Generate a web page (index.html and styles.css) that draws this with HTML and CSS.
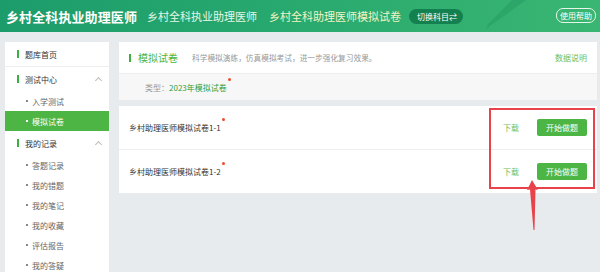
FILE: index.html
```html
<!DOCTYPE html>
<html lang="zh">
<head>
    <meta charset="UTF-8">
    <meta name="viewport" content="width=device-width, initial-scale=1.0">
    <title>模拟试卷</title>
    <link rel="stylesheet" href="styles.css">
</head>
<body>
    <div class="header">
        <svg class="header-deco" width="60" height="32" viewBox="0 0 60 32">
            <polygon points="44,0 58,0 22,26 18,30 20,24" fill="#1f8f5c" opacity="0.35"/>
        </svg>
        <span class="logo">乡村全科执业助理医师</span>
        <span class="sub-title">乡村全科执业助理医师</span>
        <span class="paper-title">乡村全科助理医师模拟试卷</span>
        <span class="switch-btn">切换科目⇄</span>
        <span class="help-btn">使用帮助</span>
    </div>

    <div class="layout">
        <div class="sidebar">
            <div class="nav-head nav-first"><i class="bar"></i>题库首页</div>
            <div class="nav-head"><i class="bar"></i>测试中心<span class="chevron"></span></div>
            <div class="nav-item"><i class="dot"></i>入学测试</div>
            <div class="nav-item active"><i class="dot"></i>模拟试卷</div>
            <div class="nav-head"><i class="bar"></i>我的记录<span class="chevron"></span></div>
            <div class="nav-item"><i class="dot"></i>答题记录</div>
            <div class="nav-item"><i class="dot"></i>我的错题</div>
            <div class="nav-item"><i class="dot"></i>我的笔记</div>
            <div class="nav-item"><i class="dot"></i>我的收藏</div>
            <div class="nav-item"><i class="dot"></i>评估报告</div>
            <div class="nav-item"><i class="dot"></i>我的答疑</div>
        </div>

        <div class="main">
            <div class="card">
                <div class="card-head">
                    <i class="bar"></i>
                    <span class="card-title">模拟试卷</span>
                    <span class="card-desc">科学模拟演练，仿真模拟考试，进一步强化复习效果。</span>
                    <span class="card-link">数据说明</span>
                </div>
                <div class="card-filter">
                    <span class="filter-label">类型：</span>
                    <span class="filter-value">2023年模拟试卷<i class="red-dot"></i></span>
                </div>
            </div>

            <div class="card paper-list">
                <div class="paper-row">
                    <span class="paper-name">乡村助理医师模拟试卷1-1<i class="red-dot"></i></span>
                    <span class="download">下载</span>
                    <span class="start-btn">开始做题</span>
                </div>
                <div class="paper-row">
                    <span class="paper-name">乡村助理医师模拟试卷1-2<i class="red-dot"></i></span>
                    <span class="download">下载</span>
                    <span class="start-btn">开始做题</span>
                </div>
            </div>

            <div class="mark-box"></div>
            <svg class="mark-arrow" width="14" height="52" viewBox="0 0 14 52">
                <polygon points="6,0 12,10 9.5,9.5 8.5,50 7.5,50 4,9.5 1,10" fill="#e8434a"/>
            </svg>
        </div>
    </div>
</body>
</html>
```

FILE: styles.css
```css
body {
    margin: 0;
    background-color: #e8ebee;
    font-family: "Noto Sans CJK SC", "Liberation Sans", sans-serif;
    color: #333;
    overflow: hidden;
}
.header {
    position: relative;
    height: 32px;
    display: flex;
    align-items: center;
    padding: 0 4px 0 6px;
    background: linear-gradient(90deg, #1c9c6b 0%, #27a86e 45%, #3ab672 100%);
    color: #fff;
    white-space: nowrap;
}
.header-deco {
    position: absolute;
    left: 468px;
    top: 0;
}
.logo {
    font-size: 13px;
    font-weight: bold;
    letter-spacing: 0.1px;
}
.sub-title {
    margin-left: 10px;
    font-size: 11px;
    color: #e6f6e6;
}
.paper-title {
    margin-left: 12px;
    font-size: 11px;
    color: #f3f3c4;
}
.switch-btn {
    margin-left: 8px;
    height: 15px;
    line-height: 15px;
    padding: 0 6px 0 8px;
    border-radius: 8px;
    background-color: #13804f;
    font-size: 8px;
}
.help-btn {
    margin-left: auto;
    height: 13px;
    line-height: 13px;
    padding: 0 3px;
    border: 1px solid #e8f6ea;
    border-radius: 7px;
    font-size: 8px;
    margin-top: -2px;
}
.layout {
    display: flex;
    gap: 10px;
    padding: 10px 3px 0 5px;
}
.sidebar {
    width: 104px;
    flex-shrink: 0;
    height: 240px;
    background: #fff;
}
.nav-head {
    display: flex;
    align-items: center;
    height: 24px;
    padding-left: 12px;
    font-size: 8px;
    color: #333;
}
.nav-first {
    height: 24px;
    border-bottom: 1px solid #eeeeee;
}
.bar {
    display: inline-block;
    width: 2px;
    height: 8px;
    margin-right: 6px;
    background-color: #3cb043;
}
.chevron {
    margin-left: auto;
    margin-right: 8px;
    width: 4px;
    height: 4px;
    border-left: 1px solid #bbb;
    border-top: 1px solid #bbb;
    transform: rotate(45deg);
    margin-top: 2px;
}
.nav-item {
    display: flex;
    align-items: center;
    height: 20px;
    padding-left: 21px;
    font-size: 8px;
    color: #666;
}
.dot {
    display: inline-block;
    width: 2px;
    height: 2px;
    margin-right: 4px;
    background-color: #888;
}
.nav-item.active {
    background-color: #4cb543;
    color: #fff;
}
.nav-item.active .dot {
    background-color: #fff;
}
.main {
    position: relative;
    flex: 1;
    display: flex;
    flex-direction: column;
    gap: 6px;
}
.card {
    background: #fff;
}
.card-head {
    display: flex;
    align-items: center;
    height: 31px;
    padding: 0 10px 0 10px;
    border-bottom: 1px solid #eeeeee;
}
.card-head .bar {
    height: 8px;
    margin-right: 7px;
}
.card-title {
    font-size: 10px;
    color: #4cb543;
}
.card-desc {
    margin-left: 14px;
    font-size: 7.7px;
    color: #999;
}
.card-link {
    margin-left: auto;
    font-size: 8px;
    color: #6cbf5c;
}
.card-filter {
    display: flex;
    align-items: center;
    height: 26px;
    padding-left: 26px;
    background-color: #f7f7f7;
    font-size: 8px;
}
.filter-label {
    color: #999;
}
.filter-value {
    position: relative;
    color: #2e9e3e;
}
.red-dot {
    position: absolute;
    right: -4px;
    top: -4px;
    width: 3px;
    height: 3px;
    border-radius: 50%;
    background-color: #f04a2a;
}
.paper-row {
    display: flex;
    align-items: center;
    height: 43px;
    padding: 0 10px;
    font-size: 8px;
}
.paper-row + .paper-row {
    border-top: 1px solid #eeeeee;
}
.paper-name {
    position: relative;
    color: #333;
}
.download {
    margin-left: auto;
    color: #6cbf5c;
}
.start-btn {
    margin-left: 18px;
    width: 50px;
    height: 17px;
    line-height: 17px;
    text-align: center;
    border-radius: 2px;
    background-color: #4cb543;
    color: #fff;
}
.mark-box {
    position: absolute;
    left: 370px;
    top: 66px;
    width: 102px;
    height: 77px;
    border: 2px solid #e8434a;
}
.mark-arrow {
    position: absolute;
    left: 407px;
    top: 138px;
}
```
